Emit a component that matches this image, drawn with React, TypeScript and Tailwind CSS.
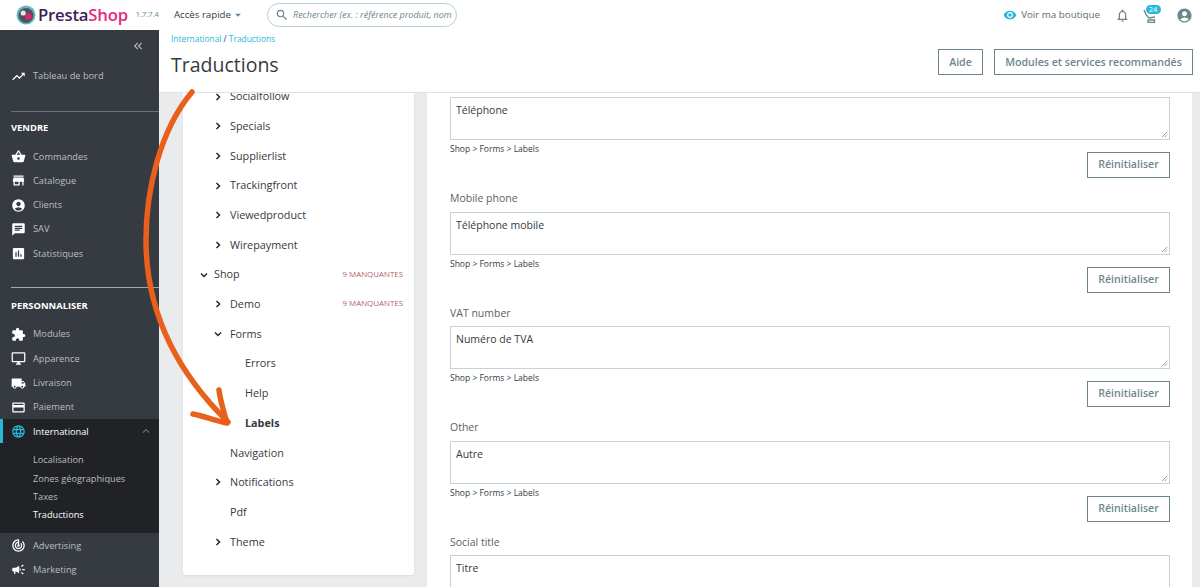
import React from "react";
import {
  MdShoppingBasket, MdStore, MdAccountCircle, MdChat, MdAssessment, MdExtension, MdOutlineDesktopWindows,
  MdLocalShipping, MdCreditCard, MdLanguage, MdTrendingUp, MdTrackChanges, MdCampaign, MdSearch,
  MdVisibility, MdNotificationsNone, MdExpandLess, MdKeyboardDoubleArrowLeft, MdArrowDropDown,
} from "react-icons/md";

const font = "font-['Open_Sans',sans-serif]";

function Side({ icon: I, label }: { icon: any; label: string }) {
  return (
    <div className="flex h-[24.3px] items-center pl-[11px]">
      <I className="w-[15px] h-[15px] text-white shrink-0" />
      <span className="ml-[7px] text-[9.25px] text-[#bebebe]">{label}</span>
    </div>
  );
}

function Sidebar() {
  return (
    <aside className="w-[159px] shrink-0 bg-[#363a41] flex flex-col overflow-hidden">
      <div className="flex justify-end pr-[14px] pt-[9px] h-[34px]">
        <MdKeyboardDoubleArrowLeft className="w-[14px] h-[14px] text-[#bebebe]" />
      </div>
      <Side icon={MdTrendingUp} label="Tableau de bord" />
      <div className="ml-[11px] h-px bg-[#6c7278] mt-[23px]" />
      <div className="pl-[11px] mt-[10px] h-[16px] text-[9.4px] font-bold text-white leading-[12px]">VENDRE</div>
      <div className="mt-[6px]">
        <Side icon={MdShoppingBasket} label="Commandes" />
        <Side icon={MdStore} label="Catalogue" />
        <Side icon={MdAccountCircle} label="Clients" />
        <Side icon={MdChat} label="SAV" />
        <Side icon={MdAssessment} label="Statistiques" />
      </div>
      <div className="ml-[11px] h-px bg-[#a4a7aa] mt-[21px]" />
      <div className="pl-[11px] mt-[12px] h-[16px] text-[9.4px] font-bold text-white leading-[12px]">PERSONNALISER</div>
      <div className="mt-[6.5px]">
        <Side icon={MdExtension} label="Modules" />
        <Side icon={MdOutlineDesktopWindows} label="Apparence" />
        <Side icon={MdLocalShipping} label="Livraison" />
        <Side icon={MdCreditCard} label="Paiement" />
      </div>
      <div className="bg-[#202226] h-[114px] shrink-0">
        <div className="flex h-[24px] items-center pl-[11px] pr-[6px] border-l-[3px] border-[#25b9d7]">
          <MdLanguage className="w-[15px] h-[15px] text-[#25b9d7] -ml-[3px] shrink-0" />
          <span className="ml-[7px] text-[9.25px] text-white">International</span>
          <MdExpandLess className="ml-auto w-[14px] h-[14px] text-[#6c7278]" />
        </div>
        <div className="pl-[33px] pt-[8px] text-[9.2px] leading-[18.2px] text-[#bebebe]">
          <div>Localisation</div>
          <div>Zones géographiques</div>
          <div>Taxes</div>
          <div className="text-white">Traductions</div>
        </div>
      </div>
      <Side icon={MdTrackChanges} label="Advertising" />
      <Side icon={MdCampaign} label="Marketing" />
    </aside>
  );
}

function Chevron({ open }: { open?: boolean }) {
  return (
    <svg viewBox="0 0 8 8" className="w-[8px] h-[8px] shrink-0" fill="none" stroke="#25282d" strokeWidth="1.5">
      {open ? <path d="M1 2.5 L4 5.5 L7 2.5" /> : <path d="M2.5 1 L5.5 4 L2.5 7" />}
    </svg>
  );
}

function Row({ level, label, chev, open, missing, bold }: { level: number; label: string; chev?: boolean; open?: boolean; missing?: boolean; bold?: boolean }) {
  const pad = level === 0 ? "pl-[31px]" : level === 1 ? "pl-[47px]" : "pl-[62px]";
  return (
    <div className={`relative flex h-[29.7px] items-center ${pad} pr-[11px] text-[10.8px] text-[#363a41]`}>
      {chev && <span className={`absolute ${level === 0 ? "left-[17px]" : "left-[31px]"} top-[11px]`}><Chevron open={open} /></span>}
      <span className={bold ? "font-bold" : ""}>{label}</span>
      {missing && <span className="ml-auto text-[7.9px] text-[#b5606c]">9 MANQUANTES</span>}
    </div>
  );
}

function Tree() {
  return (
    <div className="w-[231px] ml-[24px] h-[482px] bg-white rounded-b-[3px] shadow-[0_1px_2px_rgba(0,0,0,0.08)] shrink-0 overflow-hidden">
      <div className="-mt-[11.5px]">
        <Row level={1} chev label="Socialfollow" />
        <Row level={1} chev label="Specials" />
        <Row level={1} chev label="Supplierlist" />
        <Row level={1} chev label="Trackingfront" />
        <Row level={1} chev label="Viewedproduct" />
        <Row level={1} chev label="Wirepayment" />
        <Row level={0} chev open label="Shop" missing />
        <Row level={1} chev label="Demo" missing />
        <Row level={1} chev open label="Forms" />
        <Row level={2} label="Errors" />
        <Row level={2} label="Help" />
        <Row level={2} label="Labels" bold />
        <Row level={1} label="Navigation" />
        <Row level={1} chev label="Notifications" />
        <Row level={1} label="Pdf" />
        <Row level={1} chev label="Theme" />
      </div>
    </div>
  );
}

function Field({ label, value, last }: { label?: string; value: string; last?: boolean }) {
  return (
    <div className={`${label ? "h-[114.5px]" : "h-[94px]"} shrink-0`}>
      {label && <div className="h-[20.5px] text-[10.5px] leading-[14px] text-[#5b5f64]">{label}</div>}
      <div className="relative h-[43px] border border-[#c5d3d7] px-[5px] pt-[4px] text-[10.5px] leading-[16px] text-[#363a41]">
        {value}
        <svg viewBox="0 0 8 8" className="absolute right-[1px] bottom-[1px] w-[7px] h-[7px]" stroke="#777" strokeWidth="0.8">
          <path d="M1 7 L7 1 M4 7 L7 4" />
        </svg>
      </div>
      {!last && (
        <>
          <div className="text-[8.5px] leading-[10px] mt-[4px] text-[#363a41]">Shop &gt; Forms &gt; Labels</div>
          <div className="flex justify-end -mt-[2px]">
            <button className="h-[26px] w-[83px] border border-[#6c868e] text-[10.6px] font-semibold text-[#6c868e]">Réinitialiser</button>
          </div>
        </>
      )}
    </div>
  );
}

function Logo() {
  return (
    <svg viewBox="0 0 20 20" className="w-[20px] h-[20px]">
      <circle cx="10" cy="10" r="9.5" fill="#62b8c6" />
      <circle cx="10" cy="10.5" r="7.5" fill="#50535b" />
      <circle cx="12.5" cy="11.5" r="3.2" fill="#e0226f" />
      <circle cx="7.2" cy="8" r="2.6" fill="#e6e7e8" />
    </svg>
  );
}

function CartIcon() {
  return (
    <svg viewBox="0 0 15 15" className="w-[15px] h-[15px]" fill="none" stroke="#6c868e" strokeWidth="1.3">
      <path d="M2 2 C3 5.5 4.5 8 7 10 L13 9" />
      <path d="M6 12 H12.5 V14.5 H6 Z" />
    </svg>
  );
}

export default function App() {
  return (
    <div className={`relative w-[1200px] h-[587px] overflow-hidden bg-[#eaebec] flex flex-col ${font}`}>
      <header className="h-[30px] shrink-0 bg-white flex items-center text-[#363a41]">
        <div className="ml-[16px]"><Logo /></div>
        <span className="ml-[2px] text-[16.7px] font-semibold text-[#3d1e55] tracking-[-0.2px]">Presta<span className="text-[#e6287a]">Shop</span></span>
        <span className="ml-[8px] text-[7.5px] text-[#6c868e]">1.7.7.4</span>
        <span className="ml-[15px] text-[9.7px]">Accès rapide</span>
        <MdArrowDropDown className="w-[14px] h-[14px] text-[#6c868e]" />
        <div className="ml-[22px] w-[190px] h-[24px] rounded-[12px] border border-[#bbcdd2] flex items-center pl-[7px] overflow-hidden">
          <MdSearch className="w-[14px] h-[14px] text-[#6c868e] shrink-0" />
          <span className="ml-[4px] text-[9px] italic text-[#6c868e] whitespace-nowrap">Rechercher (ex. : référence produit, nom</span>
        </div>
        <MdVisibility className="ml-auto w-[14px] h-[14px] text-[#25b9d7]" />
        <span className="ml-[4px] text-[9.75px] text-[#5b6b70]">Voir ma boutique</span>
        <MdNotificationsNone className="ml-[15px] w-[15px] h-[15px] text-[#6c868e]" />
        <div className="relative ml-[11.5px]">
          <CartIcon />
          <span className="absolute -top-[3px] left-[4px] w-[15px] h-[9px] rounded-full bg-[#25b9d7] text-white text-[7.5px] leading-[9px] text-center">24</span>
        </div>
        <MdAccountCircle className="ml-[19px] mr-[7.5px] w-[17px] h-[17px] text-[#6c868e]" />
      </header>
      <div className="flex flex-1 min-h-0">
        <Sidebar />
        <main className="flex-1 min-w-0 flex flex-col">
          <div className="h-[63px] shrink-0 bg-white border-b border-[#dfe3e5] pl-[12px] pr-[7px]">
            <div className="pt-[3px] text-[8.4px] leading-[12px] text-[#25b9d7]">International <span className="text-[#363a41]">/</span> Traductions</div>
            <div className="flex items-start justify-between">
              <h1 className="text-[19.5px] leading-[28px] mt-[6px] text-[#363a41]">Traductions</h1>
              <div className="flex gap-[11px] mt-[4px]">
                <button className="h-[26px] w-[45px] pt-[1px] border border-[#6c868e] text-[10.6px] font-semibold text-[#6c868e]">Aide</button>
                <button className="h-[26px] w-[199px] pt-[1px] border border-[#6c868e] text-[10.6px] font-semibold text-[#6c868e]">Modules et services recommandés</button>
              </div>
            </div>
          </div>
          <div className="flex flex-1 min-h-0">
            <Tree />
            <div className="ml-[13px] w-[765px] bg-white overflow-hidden pl-[23px] pr-[22px] pt-[4px] flex flex-col">
              <Field value="Téléphone" />
              <Field label="Mobile phone" value="Téléphone mobile" />
              <Field label="VAT number" value="Numéro de TVA" />
              <Field label="Other" value="Autre" />
              <Field label="Social title" value="Titre" last />
            </div>
          </div>
        </main>
      </div>
      <svg viewBox="0 0 1200 587" className="absolute inset-0 w-[1200px] h-[587px] pointer-events-none" fill="none" stroke="#e8601c" strokeLinecap="round" strokeLinejoin="round">
        <path d="M192 92 C160 130 146 190 146 240 C146 315 180 375 228 422" strokeWidth="5.5" />
        <path d="M219 390 C220 400 224 412 227 423 C215 421 204 416 193 414" strokeWidth="5.5" />
      </svg>
    </div>
  );
}
